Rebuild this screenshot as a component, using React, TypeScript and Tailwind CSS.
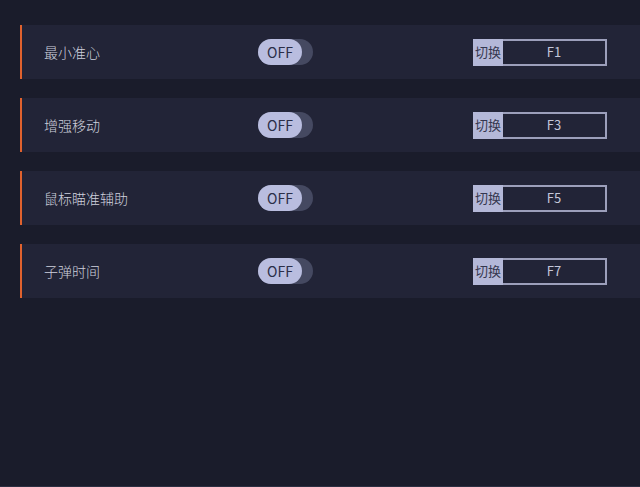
import React from "react";

const rows = [
  { name: "最小准心", key: "F1" },
  { name: "增强移动", key: "F3" },
  { name: "鼠标瞄准辅助", key: "F5" },
  { name: "子弹时间", key: "F7" },
];

function Toggle() {
  return (
    <div className="flex h-[26px] w-[55px] items-center rounded-full bg-[#454961]">
      <div className="flex h-[26px] w-[44px] items-center justify-center rounded-full bg-[#b9bddf] text-[14px] text-[#2b2e48]">
        OFF
      </div>
    </div>
  );
}

function KeyBind({ k }: { k: string }) {
  return (
    <div className="flex h-[27px] w-[134px]">
      <div className="flex w-[30px] items-center justify-center bg-[#b4b8d8] text-[13px] text-[#34374f]">
        切换
      </div>
      <div className="flex flex-1 items-center justify-center border-2 border-l-0 border-[#9c9fbb] text-[13px] text-[#c4c7da]">
        {k}
      </div>
    </div>
  );
}

export default function App() {
  return (
    <div
      className="flex h-[487px] w-[640px] flex-col gap-[19px] bg-[#1a1c2b] pl-[20px] pt-[25px] border-b border-[#2c2f42]"
      style={{ fontFamily: '"Noto Sans CJK SC", "Noto Sans", sans-serif' }}
    >
      {rows.map((r) => (
        <div
          key={r.name}
          className="flex h-[54px] items-center border-l-2 border-[#e0622e] bg-[#222437]"
        >
          <div className="w-[236px] pl-[22px] text-[14px] font-light text-[#cfd1de]">{r.name}</div>
          <Toggle />
          <div className="w-[160px]" />
          <KeyBind k={r.key} />
        </div>
      ))}
    </div>
  );
}
